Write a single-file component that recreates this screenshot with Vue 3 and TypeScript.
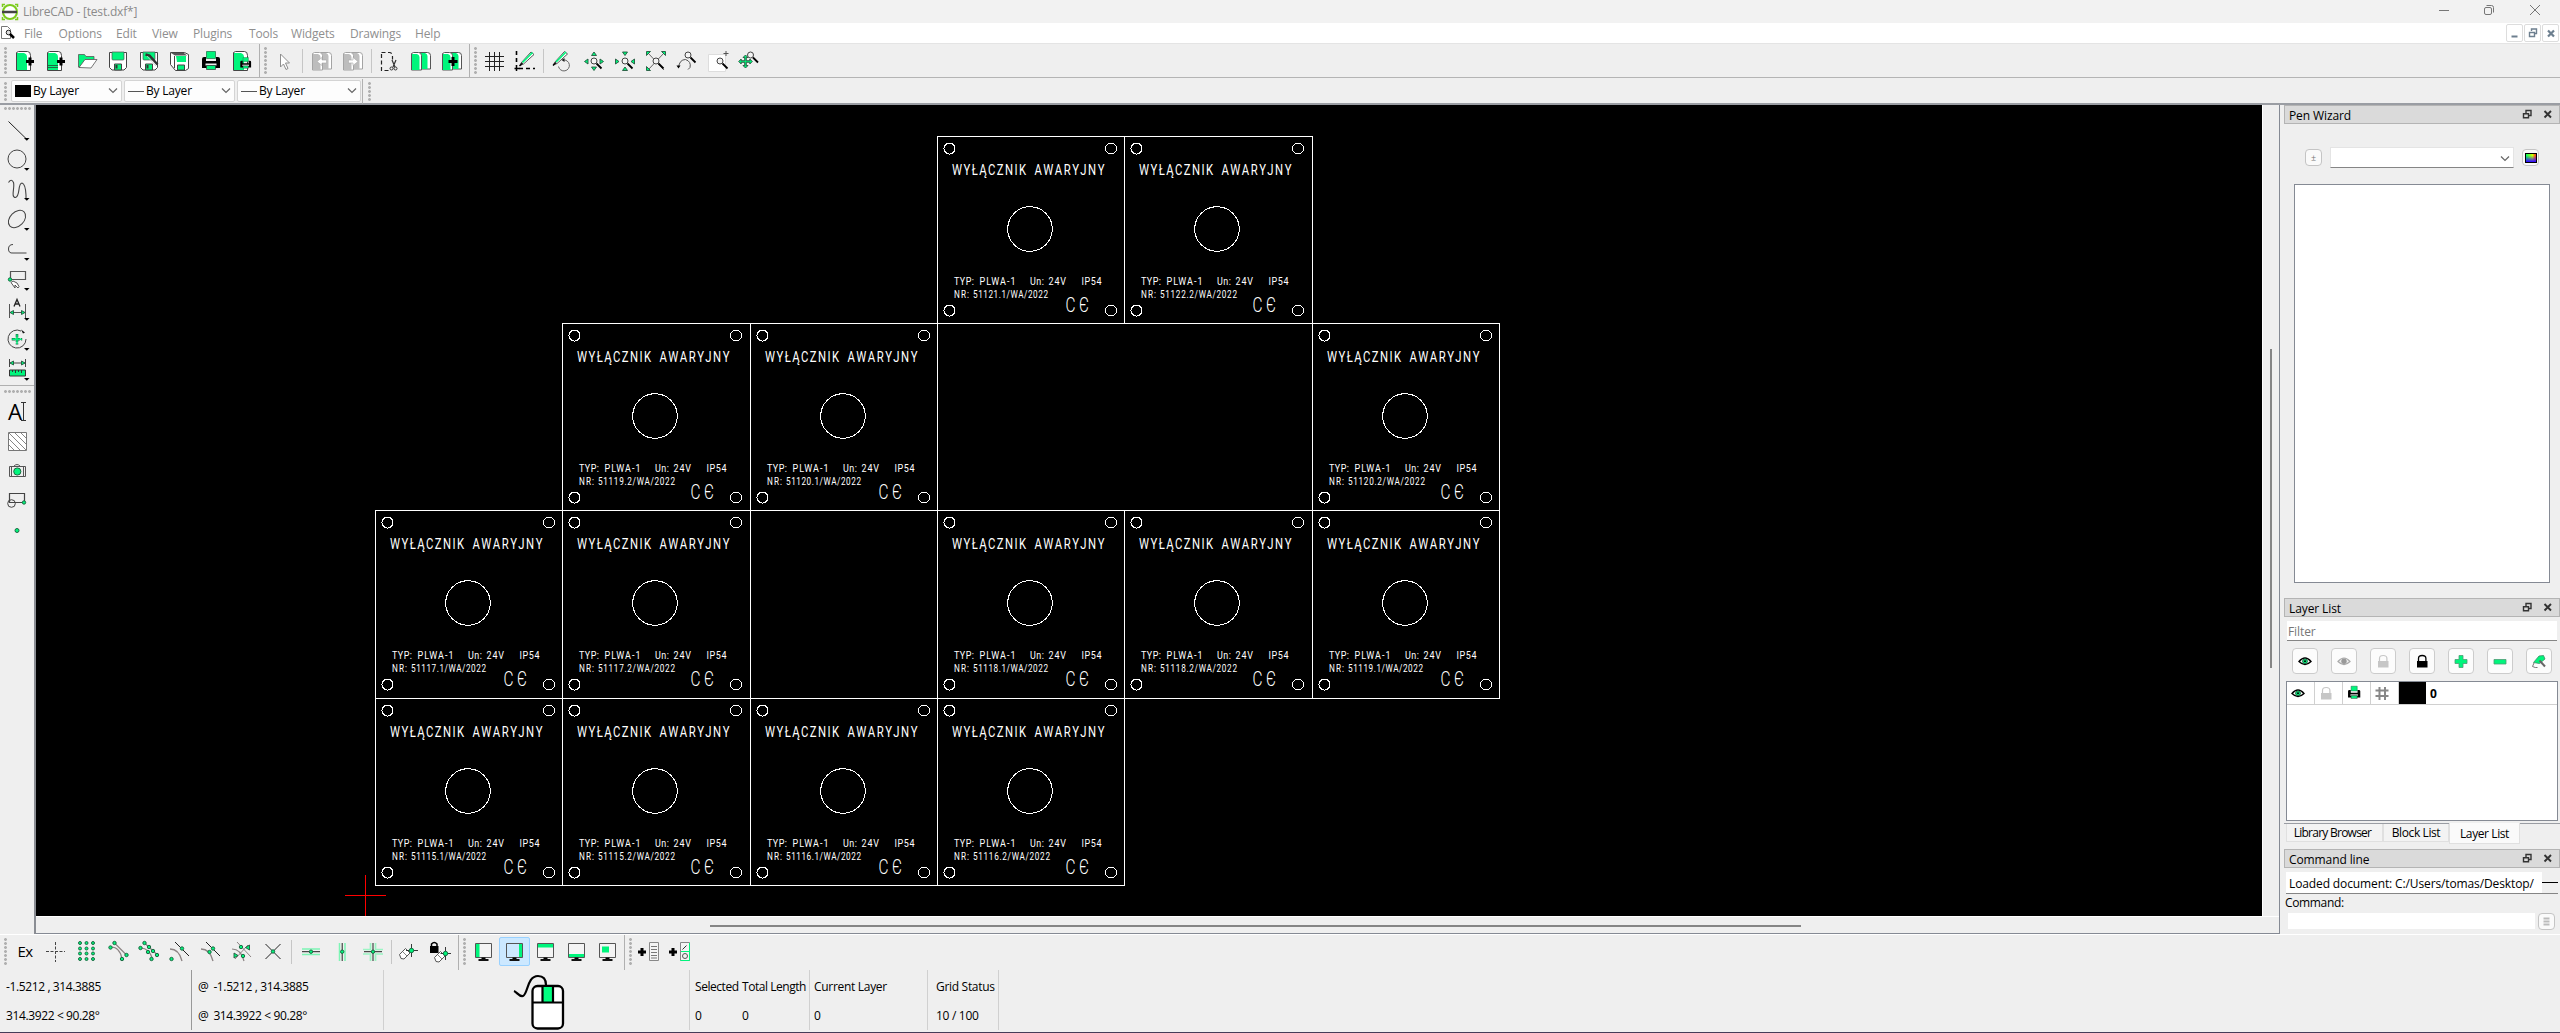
<script setup lang="ts">
interface Plate {
  col: number
  row: number
  serial: string
}
interface Tool {
  icon: string
  active?: boolean
}
interface Label {
  text: string
  x: number
  y: number
  w: number
  size: number
}

const G = '#00f57c'
const dot = (x: number, y: number, r = 1.7): string =>
  `<circle cx="${x}" cy="${y}" r="${r}" fill="${G}" stroke="#1c6b43" stroke-width="1"/>`
const plus = (x: number, y: number, s = 4): string =>
  `<path d="M${x - s} ${y}h${s * 2}M${x} ${y - s}v${s * 2}" stroke="#000" stroke-width="3"/>`
const lens = (x: number, y: number): string =>
  `<circle cx="${x}" cy="${y}" r="3" fill="#f4f4f4" stroke="#444"/><path d="M${x + 2.5} ${y + 2.5}l5 5" stroke="#000" stroke-width="1.8"/>`
const sheet = `<path d="M3.5 3.5l2-1h9q3 0 3 4v15h-14z" fill="#fff" stroke="#444"/><path d="M4 4h7q3 1 3 4v13h-10z" fill="${G}"/>`
const twoSheets = (fill: string, line: string): string =>
  `<path d="M10.500 3.500h8q3 0 3 3v13.500h-11z" fill="#fff" stroke="${line}"/><path d="M11 4h5q2.500 1 2.500 3v13h-7.500z" fill="${fill}"/><path d="M2.500 4.500l2-1h5q3 0 3 3v14.500h-10z" fill="#fff" stroke="${line}"/><path d="M3 5h5q2.500 1 2.500 3v13h-7.500z" fill="${fill}"/>`
const floppy = `<path d="M3.500 3.500h17v15l-2.500 2.500h-12l-2.500-2.500z" fill="#fff" stroke="#444"/><path d="M6 3h12v7q0 1-1 1h-10q-1 0-1-1z" fill="${G}" stroke="#555" stroke-width=".7"/><path d="M8.500 21v-6h7v6z" fill="${G}" stroke="#444"/><path d="M10.500 16v3.500" stroke="#333" stroke-width="2"/>`
const printer = (t = ''): string =>
  `<g transform="${t}"><path d="M7.500 2.500h9v7h-9z" fill="${G}" stroke="#1c6b43" stroke-width=".7"/><path d="M3 10q0-2 2-2h2v4h10v-4h2q2 0 2 2v9h-18z" fill="#000"/><path d="M6.500 14.500h11v2h-11z" fill="#eee"/><path d="M7.500 16.500h9v4h-9z" fill="${G}" stroke="#333" stroke-width=".7"/></g>`
const monitor = (inner: string, bg = '#f4f4f4'): string =>
  `<path d="M4.500 4.500h16v14h-16z" fill="${bg}"/>${inner}<path d="M4.500 4.500h16v14h-16z" fill="none" stroke="#555"/><path d="M10.500 18.500h4v2h-4z" fill="#000"/><path d="M7.500 21h10" stroke="#111" stroke-width="2"/>`
const drop = '<path d="M19 21h5.500l-2.700 2.700z" fill="#000"/>'
const tri = (d: string): string => `<path d="${d}" fill="${G}" stroke="#26553d" stroke-width=".9"/>`
const arc = '<path d="M2 10q9 0 12 12" fill="none" stroke="#8c8484" stroke-width="1.300"/>'
const eraser = '<path d="M1.500 15.500l6-6 4.500 4.500-6 6-3-.5z" fill="#fff" stroke="#444" stroke-width=".9"/><path d="M4.500 12.500l4.500 4.500" stroke="#666" stroke-width=".8"/>'
const pencil = `<path d="M4.500 14.500l10-11 3 2.500-10.500 9.500-3.500 1.500z" fill="#fff" stroke="#444" stroke-width=".9"/><path d="M6 14l10-10" stroke="${G}" stroke-width="1.700"/><path d="M3 17.500l3-3" stroke="#000" stroke-width="1.500"/>`

const icons: Record<string, string> = {
  newDoc: sheet + plus(17, 12.5),
  newTpl: sheet + '<path d="M4 16.500h10M4 18.500h10" stroke="#1c6b43"/>' + plus(17, 12.5),
  open: `<path d="M3.500 18v-12.500h6l1.500 2h8v3h-9l-5 8z" fill="${G}" stroke="#555" stroke-width=".8"/><path d="M4 18.500l6-8h12l-6 8.500z" fill="#fff" stroke="#555" stroke-width=".8"/>`,
  save: floppy,
  saveAs: floppy + '<path d="M8.500 5.500l4 1 8 9" fill="none" stroke="#333" stroke-width="2.500"/><path d="M10 7l9 10" stroke="#ccc" stroke-width=".8"/>',
  saveAll: `<path d="M2.500 3.500h14l4 2v14l-3 2h-10l-5-6z" fill="#fff" stroke="#444"/><path d="M3 4h13l3 2.500h-12z" fill="#555"/><path d="M8 7h10v6h-9z" fill="${G}"/><path d="M9.500 16h7v5h-7z" fill="${G}" stroke="#444"/><path d="M6.500 7v12" stroke="#444"/>`,
  print: printer(),
  preview: sheet + printer('translate(8.5 7) scale(.6)'),
  cursor: '<path d="M8.500 5v13l3-3 2.500 5.500 2-1-2.500-5.500h4z" fill="#fff" stroke="#8e8e8e"/>',
  undo: twoSheets('#bdbdbd', '#a4a4a4') + '<path d="M7 12.500l5-4v2.500h4.500v3h-4.500v2.500z" fill="#fff" stroke="#aaa" stroke-width=".6"/>',
  redo: twoSheets('#bdbdbd', '#a4a4a4') + '<path d="M17 12.500l-5-4v2.500h-4.500v3h4.500v2.500z" fill="#fff" stroke="#aaa" stroke-width=".6"/>',
  cut: '<path d="M3.500 3.500h8q2.500 0 3 4v3M3.500 5v16.500h8" fill="none" stroke="#222" stroke-width="1.200" stroke-dasharray="4 2.500"/><path d="M14 11l3 7M18 11l-3 7" stroke="#333" stroke-width="1.200"/><circle cx="13.500" cy="19.500" r="1.500" fill="none" stroke="#333"/><circle cx="17.500" cy="19.500" r="1.500" fill="none" stroke="#333"/>',
  copy: twoSheets(G, '#555'),
  paste: twoSheets(G, '#555') + plus(13, 12.5, 4.5),
  grid: '<path d="M7.500 3v19M12.500 3v19M17.500 3v19M3 7.500h19M3 12.500h19M3 17.500h19" stroke="#222"/>',
  draft: '<path d="M3.500 2v15" stroke="#000" stroke-width="1.600" stroke-dasharray="4 3"/><path d="M6 19.500h16" stroke="#000" stroke-width="1.600" stroke-dasharray="4 3"/><path d="M1.500 19.500h5M3.500 17v5" stroke="#000" stroke-width="1.500"/><g transform="translate(3.500 -.5)">' + pencil + '</g>',
  redraw: '<g transform="translate(-1 -1)">' + pencil + '</g><path d="M12 11a5.500 5.500 0 1 1-4.500 6.500" fill="none" stroke="#666"/><path d="M13.500 9v4l-3-2z" fill="#222"/>',
  zoomIn: tri('M12 3l2.500 3.500h-5z') + tri('M12 21.500l2.500-3.500h-5z') + tri('M2.500 12.500l3.500-2.500v5z') + tri('M21.500 12.500l-3.500-2.500v5z') + lens(12, 12),
  zoomOut: tri('M12 6.500l2.500-3.500h-5z') + tri('M12 18l2.500 3.500h-5z') + tri('M6 12.500l-3.500-2.500v5z') + tri('M18 12.500l3.500-2.500v5z') + lens(12, 12),
  zoomAuto: '<path d="M4 4l16 17M20 4l-16 17" stroke="#444" stroke-width=".8"/>' + tri('M2.500 2.500h4l-4 4z') + tri('M21.500 2.500h-4l4 4z') + tri('M2.500 21.500h4l-4-4z') + lens(12, 12),
  zoomPrev: '<path d="M3.500 18.500q1-8 7-8q6 2 4.500 8l-2 2" fill="none" stroke="#555"/><path d="M1.500 16.500h4l-2 3z" fill="#000"/>' + lens(13, 6),
  zoomWin: '<path d="M2.500 5.500h17v17h-17z" fill="#fff" stroke="#ddd"/><path d="M17.500 4.500h5M20 2v5" stroke="#555"/>' + lens(14, 12),
  zoomPan: tri('M8.500 6l2.500 2.500h-1.700v3.200h3.500v-1.700l2.500 2.500-2.500 2.500v-1.700h-3.500v3.200h1.700l-2.500 2.500-2.500-2.500h1.700v-3.200h-3.500v1.700l-2.500-2.500 2.500-2.500v1.700h3.500v-3.200h-1.700z') + lens(13.5, 6),
  line: '<path d="M3.500 4.500l17.500 17" stroke="#222"/>' + drop,
  circle: '<circle cx="12" cy="12" r="9" fill="none" stroke="#444"/>' + drop,
  spline: '<path d="M3.500 5.500q3-4.500 5 0c1.500 5-3 15 2 15c5-1 2-14.500 6.500-14.500q3.500 1 4 12v3" fill="none" stroke="#444" stroke-width="1.100"/>' + drop,
  ellipse: '<ellipse cx="12" cy="12" rx="10" ry="7" transform="rotate(-45 12 12)" fill="none" stroke="#444"/>' + drop,
  poly: '<path d="M8 7.500q-4.500 0-4.500 4.500t4.500 4h13.500" fill="none" stroke="#444"/>' + drop,
  select: '<path d="M5.500 4.500h15v8h-15z" fill="none" stroke="#555" stroke-width="1.200"/>' + dot(5, 12.5) + '<path d="M6 15.500l2-1.500 4 2 2 3.500-1 1.500-3-3v3z" fill="#fff" stroke="#444" stroke-width=".9"/>' + drop,
  dim: '<path d="M4.500 7v14M20.500 7v14M5 15.500h15" stroke="#555"/><path d="M9 9.500l3-7 3 7M10 7h4" fill="none" stroke="#222" stroke-width="1.300"/>' + tri('M5 15.500l3.500-2v4z') + tri('M20 15.500l-3.500-2v4z') + drop,
  modify: '<path d="M16 4a9 9 0 1 0 5 8" fill="none" stroke="#444"/><path d="M16 2.500l4 3-2 1z" fill="#111"/>' + `<path d="M12 7v10.500M6.700 12.300h10.500" stroke="#1c6b43" stroke-width="2.600" stroke-dasharray="3.600 1"/><path d="M12 7.500v9.500M7.200 12.300h9.500" stroke="${G}" stroke-width="1.400"/>` + drop,
  info: `<path d="M4.500 2v8M20.500 2v8M5 6h15" stroke="#444"/>${tri('M5 6l3.500-2v4z')}${tri('M20 6l-3.500-2v4z')}<path d="M4.500 13h16v6h-16z" fill="${G}" stroke="#333"/><path d="M7.500 13v2M10.500 13v3M13.500 13v2M16.500 13v3" stroke="#333"/>` + drop,
  hatch: '<path d="M3.500 3.500h18v18h-18z" fill="#fff" stroke="#777"/><path d="M4 16l5 5M4 10l11 11M4 4l17 17M10 4l11 11M16 4l5 5" stroke="#777" stroke-width=".9"/>',
  camera: '<path d="M4.500 7.500h16v10h-16z" fill="#eee" stroke="#555"/><path d="M8.500 7.500q3.500-4 7 0M6.500 8v9M18.500 8v9" fill="none" stroke="#555"/>' + dot(12.3, 12.5, 3.6),
  block: '<path d="M4.500 4.500h15v9h-15z" fill="none" stroke="#444" stroke-width="1.200"/><circle cx="6.500" cy="14.500" r="3.800" fill="none" stroke="#444"/>' + dot(19, 13.5),
  point: dot(12, 11.5, 2),
  crosshair: '<path d="M2 12.500h19M11.500 3v20" stroke="#444" stroke-dasharray="3 1.500"/>',
  snapGrid: [5, 11.5, 18].map((x) => [4, 9.5, 14.5, 20].map((y) => dot(x, y, 1.5)).join('')).join(''),
  snapEnd: '<path d="M8.500 4l12 12M5 8q9 0 11 12" fill="none" stroke="#8c8484" stroke-width="1.200"/>' + dot(8.5, 4) + dot(20.5, 16) + dot(4.5, 8.5) + dot(16, 20),
  snapEntity: '<path d="M7.500 4l13 12M3.500 9q9 0 12 11" fill="none" stroke="#8c8484" stroke-width="1.200"/>' + dot(7.5, 4) + dot(12, 8) + dot(16, 12) + dot(20, 16) + dot(3.5, 9) + dot(11, 13) + dot(14.5, 20),
  snapCenter: arc + '<path d="M7 3l14 14" stroke="#222"/>' + dot(14, 9.5) + dot(3.5, 20),
  snapMiddle: arc + '<path d="M7 3l14 14" stroke="#222"/>' + dot(14, 9.5) + dot(10.5, 13),
  snapDist: '<path d="M2 10q9 0 12 12" fill="none" stroke="#8c8484" stroke-width="1.200"/><path d="M7 3l14 15M5 20l13-14" stroke="#8c8484"/>' + dot(11, 8) + dot(13, 17) + tri('M19.500 6v5l-4-2.500z') + tri('M4 14v5l4-2.500z'),
  snapX: '<path d="M4.500 5l15 15M19.500 5l-15 15" stroke="#222"/>' + dot(12, 12.5),
  rH: '<path d="M3 10h18M3 15.500h18" stroke="#7df5b5" stroke-width="1.500"/><path d="M3 12.700h18" stroke="#222"/>' + dot(12, 12.7),
  rV: '<path d="M9.500 4v18M15 4v18" stroke="#7df5b5" stroke-width="1.500"/><path d="M12.200 4v18" stroke="#222"/>' + dot(12.2, 12.7),
  rO: '<path d="M2 10.500h7.500V4M14.500 4v6.500H22M2 15h7.500v7M14.500 22v-7H22" fill="none" stroke="#9bf5c4" stroke-width="1.700"/><path d="M3 12.700h18M12 4v18" stroke="#222"/>' + dot(12, 12.7),
  relZero: eraser + '<path d="M13.500 5v13M8 11.500h12" stroke="#222" stroke-width=".9"/>' + dot(13.5, 11.5, 2.2),
  lockZero: '<path d="M1 7h8.500v7h-8.500z" fill="#000"/><path d="M2.500 7v-2q2.800-3 5.500 0v2" fill="none" stroke="#000" stroke-width="1.500"/><g transform="translate(4 3)">' + eraser + '</g><path d="M16.500 8v13M11.500 14.500h10.500" stroke="#222" stroke-width=".9"/>' + dot(16.5, 14.5, 2.2),
  mLeft: monitor(`<path d="M5 5h3.500v13h-3.500z" fill="${G}"/>`),
  mRight: monitor(`<path d="M17 5h3.500v13h-3.500z" fill="${G}"/>`, '#cce8ff'),
  mTop: monitor(`<path d="M5 5h15.500v3.500h-15.500z" fill="${G}"/>`),
  mBottom: monitor(`<path d="M5 15h15.500v3.500h-15.500z" fill="${G}"/>`),
  mFloat: monitor(`<path d="M7 7.500h7v6h-7z" fill="${G}"/>`),
  addCmd: plus(5, 13) + '<path d="M12.500 3.500h9v18h-9z" fill="#f4f4f4" stroke="#888"/><path d="M14 7.500h6M14 10.500h6M14 13.500h6M14 16.500h6M14 19h6" stroke="#777"/>',
  addTool: plus(5, 13) + `<path d="M12.500 3.500h9v18h-9z" fill="#f4f4f4" stroke="#888"/><path d="M21.500 4v17.500h-9M13 12.500h8.500" fill="none" stroke="${G}"/><path d="M14.500 10.500l4-4" stroke="#333"/><circle cx="17" cy="17" r="2.500" fill="none" stroke="#555"/>`,
  eye: '<path d="M6 12.500q6-7 12 0q-6 6-12 0z" fill="#fff" stroke="#000" stroke-width="1.400"/>' + dot(12, 12.3, 2.4) + '<circle cx="12" cy="12.300" r="1" fill="#000"/>',
  eyeOff: '<path d="M6 12.500q6-7 12 0q-6 6-12 0z" fill="#eee" stroke="#aaa" stroke-width="1.200"/><circle cx="12" cy="12.300" r="2.700" fill="#999"/>',
  lockOff: '<path d="M7 12h10.500v6.500h-10.500z" fill="#c6c6c6"/><path d="M8.500 12v-2.500q0-3 3.700-3t3.700 3v2.500" fill="none" stroke="#c6c6c6" stroke-width="1.200"/>',
  lockOn: '<path d="M7 12h10.500v6.500h-10.500z" fill="#000"/><path d="M8.500 12v-2.500q0-3 3.700-3t3.700 3v2.500" fill="none" stroke="#000" stroke-width="1.300"/>',
  add: `<path d="M10 6.500h4v4h4v4h-4v4h-4v-4h-4v-4h4z" fill="${G}" stroke="#4d9c75" stroke-width=".8"/>`,
  remove: `<path d="M6 10.500h12v4.500h-12z" fill="${G}" stroke="#4d9c75" stroke-width=".8"/>`,
  edit: `<path d="M6.500 13.500l5.500-6.500 4.500-.5 1.500 3.500-5.500 4.500z" fill="${G}" stroke="#3f8a64" stroke-width=".8"/><path d="M12.500 11.500l5.500 6" stroke="#666" stroke-width="2"/><path d="M7 14l-1.500 3.500M5.500 17.500q3 1.500 5 1" fill="none" stroke="#777"/>`,
  layerPrint: printer('translate(4 3.500) scale(.68)'),
  layerGrid: '<path d="M9.500 6v13M15 6v13M5.500 9.500h13M5.500 15h13" stroke="#888" stroke-width="2"/>',
}

const sep: Tool = { icon: 'sep' }
const tools = (names: string): Tool[] =>
  names.split(' ').map((n) => (n === '|' ? sep : { icon: n.replace('*', ''), active: n.includes('*') }))

const topGroups: Tool[][] = [
  tools('newDoc newTpl open save saveAs saveAll print preview'),
  tools('cursor | undo redo | cut copy paste'),
  tools('grid draft | redraw zoomIn zoomOut zoomAuto zoomPrev zoomWin zoomPan'),
]
const snapGroups: Tool[][] = [
  tools('ex crosshair snapGrid snapEnd snapEntity snapCenter snapMiddle snapDist snapX | rH rV rO | relZero lockZero'),
  tools('mLeft mRight* mTop mBottom mFloat'),
  tools('addCmd addTool'),
]
const drawTools = ['line', 'circle', 'spline', 'ellipse', 'poly', 'select', 'dim', 'modify', 'info']
const insertTools = ['text', 'hatch', 'camera', 'block', 'point']
const menus: [string, number][] = [
  ['File', 34.5], ['Options', 57.5], ['Edit', 36], ['View', 41], ['Plugins', 56],
  ['Tools', 42], ['Widgets', 59], ['Drawings', 65], ['Help', 40],
]
const layerButtons = ['eye', 'eyeOff', 'lockOff', 'lockOn', 'add', 'remove', 'edit']

const plates: Plate[] = [
  { col: 3, row: 0, serial: '51121.1' }, { col: 4, row: 0, serial: '51122.2' },
  { col: 1, row: 1, serial: '51119.2' }, { col: 2, row: 1, serial: '51120.1' }, { col: 5, row: 1, serial: '51120.2' },
  { col: 0, row: 2, serial: '51117.1' }, { col: 1, row: 2, serial: '51117.2' }, { col: 3, row: 2, serial: '51118.1' },
  { col: 4, row: 2, serial: '51118.2' }, { col: 5, row: 2, serial: '51119.1' },
  { col: 0, row: 3, serial: '51115.1' }, { col: 1, row: 3, serial: '51115.2' }, { col: 2, row: 3, serial: '51116.1' },
  { col: 3, row: 3, serial: '51116.2' },
]
const colX = (c: number): number => Math.floor(339.2 + c * 187.4)
const rowY = (r: number): number => Math.floor(31.2 + r * 187.3)
const holes: [number, number][] = [[12, 12], [173.5, 12], [12, 174], [173.5, 174]]
const squeeze = 0.78
const labels = (p: Plate): Label[] => [
  { text: 'WYŁĄCZNIK', x: 15, y: 38.5, w: 74, size: 14.5 },
  { text: 'AWARYJNY', x: 97.5, y: 38.5, w: 70, size: 14.5 },
  { text: 'TYP:', x: 17, y: 148.5, w: 20, size: 11.5 },
  { text: 'PLWA-1', x: 42.5, y: 148.5, w: 36, size: 11.5 },
  { text: 'Un:', x: 93, y: 148.5, w: 14, size: 11.5 },
  { text: '24V', x: 111.5, y: 148.5, w: 17.5, size: 11.5 },
  { text: 'IP54', x: 144.5, y: 148.5, w: 20, size: 11.5 },
  { text: 'NR:', x: 17, y: 162, w: 15, size: 10.5 },
  { text: p.serial + '/WA/2022', x: 36, y: 162, w: p.serial.endsWith('1') ? 75 : 77, size: 10.5 },
]
</script>

<template>
  <div class="app">
    <header class="titlebar">
      <svg class="logo" width="18" height="18" viewBox="0 0 18 18">
        <circle cx="9" cy="9" r="7" fill="#fff" stroke="#7ccb1c" stroke-width="2" />
        <path d="M1.500 4v-2.500h2.500M14 1.500h2.500v2.500M16.500 14v2.500h-2.500M4 16.500h-2.500v-2.500" fill="none" stroke="#7ccb1c" stroke-width="1.500" />
        <path d="M1 9h15" stroke="#444" stroke-width="2.500" />
      </svg>
      <span class="title">LibreCAD - [test.dxf*]</span>
      <svg class="winctl" width="104" height="12" viewBox="0 0 104 12" fill="none" stroke="#777">
        <path d="M0 6.500h10" />
        <rect x="45.500" y="3.500" width="7" height="7" rx="1.500" />
        <path d="M47.500 1.500h5q2 0 2 2v5" />
        <path d="M91 1l10 10M101 1l-10 10" />
      </svg>
    </header>

    <nav class="menubar">
      <svg class="docicon" width="16" height="16" viewBox="0 0 16 16">
        <path d="M1.500 1.500h6l3 3v9h-9z" fill="#fff" stroke="#777" />
        <circle cx="8.500" cy="7.500" r="2.300" fill="#ddd" stroke="#222" />
        <path d="M10 9l4 4" stroke="#000" stroke-width="2.500" />
      </svg>
      <span v-for="[name, w] in menus" :key="name" class="menu" :style="{ width: w + 'px' }">{{ name }}</span>
      <span class="mdi">
        <i><svg width="16" height="16"><path d="M4.500 11.500h6" stroke="#6d7f8f" stroke-width="2" /></svg></i>
        <i><svg width="16" height="16" fill="none" stroke="#6d7f8f"><path d="M6.500 6v-2h5v4.500h-2" stroke-width="1.400" /><path d="M4.500 7.500h5v4h-5z" stroke-width="1.400" /></svg></i>
        <i><svg width="16" height="16"><path d="M5 5.500l6 6M11 5.500l-6 6" stroke="#6d7f8f" stroke-width="2.200" /></svg></i>
      </span>
    </nav>

    <div class="toolbar">
      <div v-for="(g, i) in topGroups" :key="i" class="group">
        <span class="grip"></span>
        <template v-for="(t, k) in g" :key="k">
          <span v-if="t.icon === 'sep'" class="sep"></span>
          <span v-else class="tool"><svg width="24" height="24" viewBox="0 0 24 24" v-html="icons[t.icon]"></svg></span>
        </template>
      </div>
    </div>

    <div class="penbar">
      <span class="grip"></span>
      <span v-for="n in 3" :key="n" class="combo" :class="{ wide: n === 3 }">
        <b v-if="n === 1" class="swatch"></b><b v-else class="stroke"></b>
        <span>By Layer</span>
        <svg class="chev" width="10" height="6"><path d="M1 .5l4 4 4-4" fill="none" stroke="#666" stroke-width="1.200" /></svg>
      </span>
      <span class="edge"></span>
      <span class="grip"></span>
    </div>

    <main class="middle">
      <aside class="left">
        <span class="hgrip"></span>
        <span v-for="t in drawTools" :key="t" class="vtool"><svg width="24" height="24" viewBox="0 0 24 24" v-html="icons[t]"></svg></span>
        <span class="hline"></span>
        <span class="hgrip second"></span>
        <span v-for="t in insertTools" :key="t" class="vtool">
          <svg v-if="t === 'text'" width="24" height="24" viewBox="0 0 24 24">
            <text x="3" y="20.500" class="bigA" textLength="14" lengthAdjust="spacingAndGlyphs">A</text>
            <path d="M16 3.500h5M16 21.500h5M18.500 4v17" stroke="#333" />
          </svg>
          <svg v-else width="24" height="24" viewBox="0 0 24 24" v-html="icons[t]"></svg>
        </span>
      </aside>

      <section class="view">
        <div class="canvasrow">
          <svg class="canvas" width="2226" height="811" viewBox="0 0 2226 811">
            <g v-for="p in plates" :key="p.serial" :transform="`translate(${colX(p.col)} ${rowY(p.row)})`">
              <g fill="none" stroke="#fff" shape-rendering="crispEdges">
                <rect x=".5" y=".5" :width="colX(p.col + 1) - colX(p.col)" :height="rowY(p.row + 1) - rowY(p.row)" />
                <circle v-for="([x, y], k) in holes" :key="k" :cx="x + 0.5" :cy="y + 0.5" r="5.500" />
                <circle cx="93" cy="93" r="22.300" />
              </g>
              <g class="cad">
                <text
                  v-for="l in labels(p)"
                  :key="l.text"
                  :transform="`translate(${l.x} ${l.y}) scale(${squeeze} 1)`"
                  :font-size="l.size"
                  :textLength="l.w / squeeze"
                >{{ l.text }}</text>
                <text class="mark" x="128.500" y="175.500" textLength="10" lengthAdjust="spacingAndGlyphs">C</text>
                <text class="mark" x="142" y="175.500" textLength="10" lengthAdjust="spacingAndGlyphs">Є</text>
              </g>
            </g>
            <path d="M309 790.500h41M329.500 770v41" stroke="#f00" shape-rendering="crispEdges" />
          </svg>
          <div class="vscroll"><i></i></div>
        </div>
        <div class="hscroll"><i></i></div>
      </section>

      <aside class="docks">
        <div class="docktitle"><span>Pen Wizard</span>
          <svg width="32" height="12" class="dockctl"><path d="M4 4V1.500h5v5h-2" fill="none" stroke="#333" stroke-width="1.400" /><path d="M1.500 4.700h5v4h-5z" fill="none" stroke="#333" stroke-width="1.400" /><path d="M22.500 2l6.500 6.500M29 2l-6.500 6.500" stroke="#333" stroke-width="1.900" /></svg>
        </div>
        <div class="wizard">
          <span class="mini">±</span>
          <span class="wcombo"><svg width="10" height="6"><path d="M1 .5l4 4 4-4" fill="none" stroke="#666" stroke-width="1.200" /></svg></span>
          <span class="mini"><b class="spectrum"></b></span>
        </div>
        <div class="wizlist"></div>

        <div class="docktitle"><span>Layer List</span>
          <svg width="32" height="12" class="dockctl"><path d="M4 4V1.500h5v5h-2" fill="none" stroke="#333" stroke-width="1.400" /><path d="M1.500 4.700h5v4h-5z" fill="none" stroke="#333" stroke-width="1.400" /><path d="M22.500 2l6.500 6.500M29 2l-6.500 6.500" stroke="#333" stroke-width="1.900" /></svg>
        </div>
        <div class="filter">Filter</div>
        <div class="lbuttons">
          <span v-for="b in layerButtons" :key="b"><svg width="24" height="24" viewBox="0 0 24 24" v-html="icons[b]"></svg></span>
        </div>
        <div class="layers">
          <div class="lrow">
            <span v-for="c in ['eye', 'lockOff', 'layerPrint', 'layerGrid']" :key="c" class="lcell"><svg width="24" height="24" viewBox="0 0 24 24" v-html="icons[c]"></svg></span>
            <span class="lcolor"></span>
            <span class="lname">0</span>
          </div>
        </div>
        <div class="tabs">
          <span class="tab t1">Library Browser</span>
          <span class="tab t2">Block List</span>
          <span class="tab t3">Layer List</span>
        </div>
        <div class="docktitle"><span>Command line</span>
          <svg width="32" height="12" class="dockctl"><path d="M4 4V1.500h5v5h-2" fill="none" stroke="#333" stroke-width="1.400" /><path d="M1.500 4.700h5v4h-5z" fill="none" stroke="#333" stroke-width="1.400" /><path d="M22.500 2l6.500 6.500M29 2l-6.500 6.500" stroke="#333" stroke-width="1.900" /></svg>
        </div>
        <div class="output">
          <p>Loaded document: C:/Users/tomas/Desktop/<br />test.dxf</p>
          <i></i>
        </div>
        <div class="cmdlabel">Command:</div>
        <div class="cmdrow">
          <span class="cmdinput"></span>
          <span class="mini"><svg width="15" height="15"><path d="M4.500 4.500h6M4.500 7.500h6M4.500 10.500h6" stroke="#bbb" stroke-width="1.800" /></svg></span>
        </div>
      </aside>
    </main>

    <div class="toolbar snaps">
      <div v-for="(g, i) in snapGroups" :key="i" class="group">
        <span class="grip"></span>
        <template v-for="(t, k) in g" :key="k">
          <span v-if="t.icon === 'sep'" class="sep"></span>
          <span v-else-if="t.icon === 'ex'" class="tool ex">Ex</span>
          <span v-else class="tool" :class="{ active: t.active }"><svg width="24" height="24" viewBox="0 0 24 24" v-html="icons[t.icon]"></svg></span>
        </template>
      </div>
    </div>

    <footer class="status">
      <div class="cell c1"><span>-1.5212 , 314.3885</span><span>314.3922 &lt; 90.28°</span></div>
      <div class="cell c2">
        <div><span>@</span><span>@</span></div>
        <div class="num"><span>-1.5212 , 314.3885</span><span>314.3922 &lt; 90.28°</span></div>
      </div>
      <div class="cell c3">
        <svg width="54" height="58" viewBox="0 0 54 58">
          <path d="M2 17c3 1 5 6 9 5c5-2 4-20 15-20c5 0 8 3 8 9" fill="none" stroke="#000" stroke-width="2.200" />
          <rect x="20.500" y="12" width="30.500" height="42.500" rx="5" fill="#fff" stroke="#000" stroke-width="2.300" />
          <path d="M31 13h10v15h-10z" fill="#00ff80" />
          <path d="M30.500 12v16M41 12v16M20 28.500h31" stroke="#000" stroke-width="2.200" />
        </svg>
      </div>
      <div class="cell c4"><div class="sel"><span>Selected</span><span>0</span></div><div><span>Total Length</span><span>0</span></div></div>
      <div class="cell c5"><span>Current Layer</span><span>0</span></div>
      <div class="cell c6"><span>Grid Status</span><span>10 / 100</span></div>
    </footer>
  </div>
</template>

<style>
body {
  margin: 0;
  background: #efefef;
  overflow: hidden;
}
</style>

<style scoped>
.app {
  width: 2560px;
  height: 1033px;
  display: flex;
  flex-direction: column;
  background: #efefef;
  color: #000;
  font: 12px/16px 'Open Sans', 'Noto Sans', sans-serif;
  letter-spacing: -0.4px;
  white-space: nowrap;
  overflow: hidden;
}
svg {
  display: block;
  flex: none;
  overflow: visible;
}
.app * {
  box-sizing: border-box;
}
.titlebar {
  height: 23px;
  flex: none;
  background: #f2f2f2;
  display: flex;
  align-items: center;
  color: #8b8b8b;
}
.logo {
  margin: 0 4px 0 1px;
}
.title {
  letter-spacing: -0.2px;
  padding-top: 1px;
}
.winctl {
  margin: -3px 17px 0 auto;
}
.menubar {
  height: 21px;
  flex: none;
  background: #fff;
  border-bottom: 1px solid #e4e4e4;
  display: flex;
  align-items: center;
  color: #8f8f8f;
  letter-spacing: -0.15px;
}
.docicon {
  margin-right: 8px;
}
.menu {
  flex: none;
  padding-top: 1px;
}
.mdi {
  margin-left: auto;
  display: flex;
  gap: 1px;
  padding-right: 1px;
}
.mdi i {
  width: 17px;
  height: 18px;
  border: 1px solid #ddd;
  border-radius: 2px;
}
.toolbar {
  height: 34px;
  flex: none;
  display: flex;
  background: #efefef;
  border-bottom: 1px solid #b4b4b4;
}
.group {
  display: flex;
  align-items: center;
  border-right: 1px solid #b0b0b0;
  padding-right: 1.5px;
}
.group:first-child .grip {
  width: 9.5px;
}
.group:last-child {
  border: 0;
}
.grip {
  width: 8.5px;
  height: 27px;
  flex: none;
  background: radial-gradient(circle at 1.5px 1.5px, #b0b0b0 1.2px, transparent 1.6px) 4px 0 / 20px 4px repeat-y;
}
.tool {
  width: 31px;
  height: 29px;
  flex: none;
  display: flex;
  align-items: center;
  justify-content: center;
}
.tool.active {
  background: #cce8ff;
  border: 1px solid #99d1ff;
  border-radius: 2px;
}
.tool.ex {
  font: 15px/29px 'Open Sans', sans-serif;
  letter-spacing: -0.5px;
}
.sep {
  width: 1px;
  height: 24px;
  margin: 0 3px 0 2.5px;
  background: #c6c6c6;
}
.penbar {
  height: 27px;
  flex: none;
  display: flex;
  align-items: center;
  border-bottom: 2px solid #9a9da3;
  padding-top: 1px;
}
.penbar .grip {
  width: 9px;
  height: 19px;
}
.combo {
  width: 111px;
  height: 22px;
  margin-left: 2px;
  border: 1px solid #d4d4d4;
  border-radius: 2px;
  background: #fdfdfd;
  display: flex;
  align-items: center;
  padding: 0 3px 0 3px;
  letter-spacing: -0.2px;
}
.combo.wide {
  width: 124px;
}
.swatch {
  width: 16px;
  height: 12px;
  background: #000;
  margin-right: 2px;
}
.stroke {
  width: 16px;
  height: 1px;
  background: #555;
  margin-right: 2px;
}
.chev {
  margin-left: auto;
}
.edge {
  width: 1px;
  height: 25px;
  background: #b0b0b0;
  margin: 0 1px;
}
.middle {
  height: 829px;
  flex: none;
  display: flex;
}
.left {
  width: 36px;
  flex: none;
  border-right: 2px solid #8a8d93;
  display: flex;
  flex-direction: column;
  align-items: flex-start;
}
.hgrip {
  height: 3px;
  width: 27px;
  margin: 2px 0 4px 4px;
  background: radial-gradient(circle at 1.5px 1.5px, #b0b0b0 1.2px, transparent 1.6px) 0 0 / 4px 20px repeat-x;
}
.hgrip.second {
  margin: 4px 0 3px 4px;
}
.vtool {
  width: 34px;
  height: 30px;
  display: flex;
  align-items: center;
  justify-content: center;
}
.hline {
  width: 34px;
  height: 1px;
  margin-top: 1px;
  background: #b0b0b0;
}
.bigA {
  font: 500 22px 'Open Sans', sans-serif;
  letter-spacing: 0;
}
.view {
  width: 2244px;
  flex: none;
  border-right: 1px solid #858a94;
  border-bottom: 1px solid #858a94;
}
.canvasrow {
  display: flex;
  height: 811px;
}
.canvas {
  background: #000;
  overflow: hidden;
}
.cad {
  font-family: Roboto, 'Noto Sans', sans-serif;
  font-weight: 400;
  fill: #fff;
  letter-spacing: 0;
}
.mark {
  font-size: 20px;
  font-weight: 300;
}
.vscroll {
  flex: 1;
  padding: 244px 0 0 7px;
  border-left: 1px solid #fff;
}
.vscroll i {
  display: block;
  width: 2px;
  height: 319px;
  background: #858585;
}
.hscroll {
  height: 17px;
  padding: 8px 0 0 674px;
  border-top: 1px solid #fff;
}
.hscroll i {
  display: block;
  width: 1091px;
  height: 2px;
  background: #858585;
}
.docks {
  flex: 1;
  padding-left: 4px;
  display: flex;
  flex-direction: column;
}
.docktitle {
  height: 19px;
  flex: none;
  background: #dadada;
  border: 1px solid #b4b4b4;
  display: flex;
  align-items: center;
  padding: 2px 0 0 4px;
  letter-spacing: -0.1px;
}
.dockctl {
  margin: -2px 5px 0 auto;
}
.wizard {
  height: 60px;
  flex: none;
  display: flex;
  align-items: center;
  padding: 7px 21px 0 21px;
}
.mini {
  width: 17px;
  height: 17px;
  flex: none;
  border: 1px solid #c4c4c4;
  border-radius: 4px;
  background: #fafafa;
  display: flex;
  align-items: center;
  justify-content: center;
  font-size: 9px;
  color: #777;
  letter-spacing: 0;
}
.wcombo {
  width: 184px;
  height: 21px;
  margin: 0 8px;
  background: #fff;
  border: 1px solid #e4e4e4;
  border-bottom-color: #858585;
  display: flex;
  align-items: center;
  justify-content: flex-end;
  padding: 2px 3px 0 0;
}
.spectrum {
  width: 12px;
  height: 10px;
  border: 1px solid #000;
  background: linear-gradient(to bottom, transparent 20%, #31f 95%), linear-gradient(to right, #0f6, #cf0 65%, #f22);
}
.wizlist {
  width: 256px;
  height: 399px;
  flex: none;
  margin: 0 0 15px 10px;
  background: #fff;
  border: 1px solid #858a94;
}
.filter {
  width: 270px;
  height: 20px;
  flex: none;
  margin: 4px 0 0 3px;
  background: #fff;
  border-bottom: 1px solid #858585;
  color: #777;
  padding: 3px 0 0 1px;
  letter-spacing: -0.1px;
}
.lbuttons {
  height: 40px;
  flex: none;
  display: flex;
  gap: 13px;
  padding: 7px 0 0 8px;
}
.lbuttons span {
  width: 26px;
  height: 26px;
  flex: none;
  border: 1px solid #ccc;
  border-radius: 4px;
  background: #fcfcfc;
}
.layers {
  width: 272px;
  height: 140px;
  flex: none;
  margin-left: 2px;
  background: #fff;
  border: 1px solid #858a94;
}
.lrow {
  height: 23px;
  display: flex;
  border-bottom: 1px solid #d0d0d0;
}
.lcell {
  width: 28px;
  border-right: 1px solid #d0d0d0;
  overflow: hidden;
}
.lcell svg {
  margin: -1px 0 0 -1px;
}
.lcolor {
  width: 27px;
  background: #000;
}
.lname {
  font-weight: 700;
  line-height: 24px;
  padding-left: 4px;
}
.tabs {
  height: 28px;
  flex: none;
  margin-top: 2px;
  border-top: 1px solid #9a9da3;
  display: flex;
  align-items: flex-start;
  padding-left: 2px;
  margin-bottom: -2px;
}
.tab {
  height: 18px;
  border: 1px solid #e0e0e0;
  border-top: 0;
  background: #f3f3f3;
  text-align: center;
  line-height: 18px;
}
.t1 {
  width: 97px;
  padding-right: 4px;
  letter-spacing: -0.75px;
}
.t2 {
  width: 66px;
}
.t3 {
  width: 71px;
  height: 21px;
  margin-top: -1px;
  background: #fafafa;
  line-height: 22px;
}
.output {
  width: 272px;
  height: 22px;
  flex: none;
  margin: 4px 0 0 2px;
  border-bottom: 1px solid #858585;
  display: flex;
  overflow: hidden;
  letter-spacing: -0.12px;
}
.output p {
  margin: 0;
  width: 256px;
  height: 40px;
  background: #fff;
  padding: 4px 0 0 3px;
  line-height: 15px;
}
.output i {
  width: 16px;
  height: 1px;
  margin-top: 10px;
  background: #000;
}
.cmdlabel {
  height: 19px;
  padding: 1px 0 0 1px;
  letter-spacing: -0.35px;
}
.cmdrow {
  display: flex;
  padding-left: 4px;
  gap: 3px;
}
.cmdinput {
  width: 247px;
  height: 16px;
  background: #fff;
}
.snaps {
  height: 36px;
  border: 0;
  border-top: 1px solid #fff;
}
.snaps .tool {
  margin-top: -3px;
}
.snaps .grip,
.snaps .sep {
  margin-top: -2px;
}
.status {
  height: 63px;
  flex: none;
  display: flex;
  border-bottom: 1px solid #453c58;
  letter-spacing: -0.3px;
}
.cell {
  height: 60px;
  display: flex;
  flex-direction: column;
  border-right: 1px solid #d0d0d0;
  line-height: 29px;
  padding-top: 2px;
}
.cell span {
  display: block;
}
.c1 {
  width: 192px;
  padding-left: 6px;
  border-right-color: #999;
  letter-spacing: -0.38px;
}
.c2 {
  width: 192px;
  flex-direction: row;
  padding-left: 6px;
  letter-spacing: -0.38px;
}
.num {
  margin-left: 5px;
}
.c3 {
  width: 306px;
  padding: 4px 0 0 128px;
}
.c4 {
  width: 120px;
  flex-direction: row;
  padding-left: 5px;
  letter-spacing: -0.45px;
}
.sel {
  width: 47px;
}
.c5 {
  width: 118px;
  padding-left: 4px;
}
.c6 {
  width: 71px;
  padding-left: 8px;
}
</style>
